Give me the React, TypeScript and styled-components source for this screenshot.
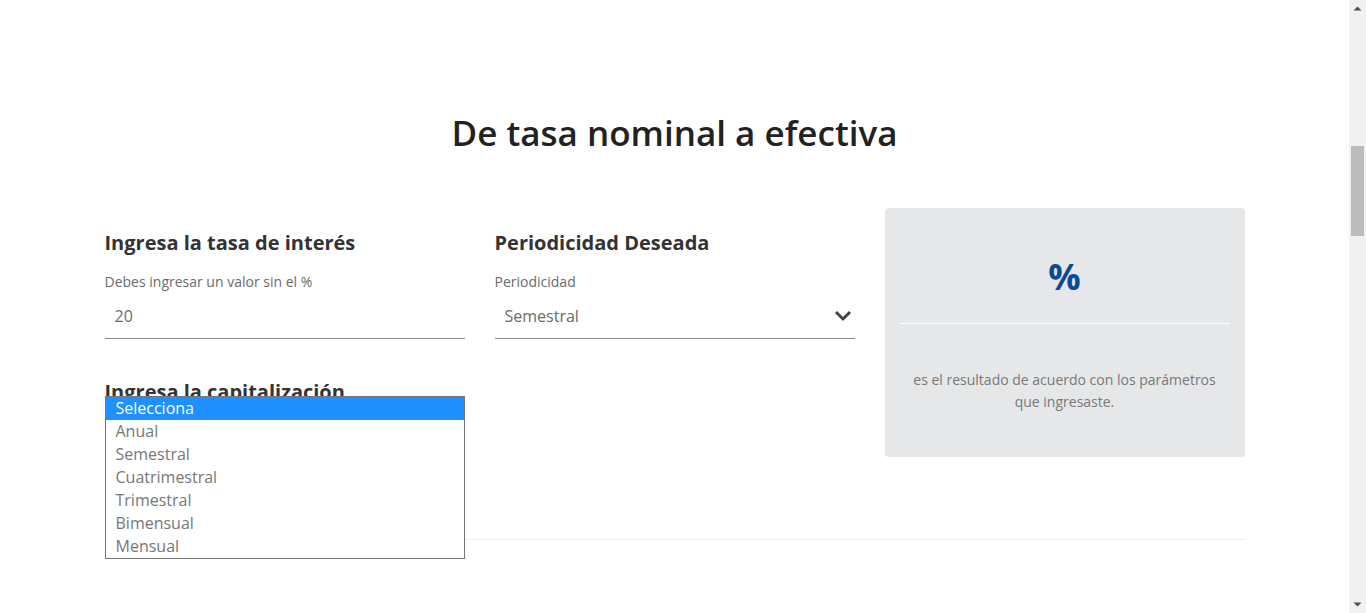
import React from "react";
import styled, { createGlobalStyle } from "styled-components";

const GlobalStyle = createGlobalStyle`
  html, body { margin: 0; padding: 0; background: #fff; overflow: hidden; }
  body { font-family: "Open Sans", "Noto Sans", sans-serif; color: #333; }
  * { box-sizing: border-box; }
`;

const Layout = styled.div`
  display: flex;
  height: 100vh;
`;

const Main = styled.main`
  flex: 1;
  min-width: 0;
  overflow: hidden;
`;

const ScrollTrack = styled.div`
  width: 17px;
  flex: none;
  display: flex;
  flex-direction: column;
  background: #f1f1f1;
`;

const ScrollButton = styled.div`
  height: 17px;
  flex: none;
  display: flex;
  align-items: center;
  justify-content: center;
`;

const ScrollRail = styled.div`
  flex: 1;
  display: flex;
  flex-direction: column;
  padding: 0 2px;
`;

const ScrollThumb = styled.div`
  height: 90px;
  margin-top: 129px;
  background: #bcbcbc;
`;

const Section = styled.section`
  width: 1140px;
  margin: 0 auto;
  padding-top: 111px;
`;

const Title = styled.h1`
  margin: 0 0 53px;
  text-align: center;
  font-size: 35px;
  line-height: 44px;
  font-weight: 600;
  color: #222;
`;

const Grid = styled.div`
  display: grid;
  grid-template-columns: 360px 360px 360px;
  column-gap: 30px;
  align-items: start;
`;

const Column = styled.div`
  display: flex;
  flex-direction: column;
`;

const Field = styled.div<{ $top: number }>`
  position: relative;
  display: flex;
  flex-direction: column;
  padding-top: ${(p) => p.$top}px;
`;

const FieldTitle = styled.h3`
  margin: 0;
  font-size: 20px;
  line-height: 24px;
  font-weight: 700;
  color: #333;
`;

const Label = styled.label`
  margin-top: 17px;
  font-size: 14px;
  line-height: 20px;
  color: #6b6b6b;
`;

const InputBox = styled.div`
  display: flex;
  align-items: center;
  justify-content: space-between;
  height: 41px;
  padding: 0 10px 5px;
  border-bottom: 1px solid #8a8a8a;
  font-size: 16px;
  color: #6b6b6b;
  margin-top: 6px;
`;

const Chevron = styled.svg`
  width: 18px;
  height: 12px;
  margin-right: -7px;
`;

const ListBox = styled.ul`
  position: absolute;
  left: 0;
  right: 0;
  top: 57px;
  margin: 0;
  padding: 0;
  list-style: none;
  background: #fff;
  border: 1px solid #767676;
  z-index: 2;
`;

const Option = styled.li<{ $active?: boolean }>`
  height: 23px;
  line-height: 23px;
  padding-left: 10px;
  font-size: 16px;
  color: ${(p) => (p.$active ? "#fff" : "#777")};
  background: ${(p) => (p.$active ? "#1e90ff" : "transparent")};
`;

const ResultCard = styled.div`
  height: 249px;
  background: #e6e7e9;
  border-radius: 4px;
  padding: 45px 15px 0;
  display: flex;
  flex-direction: column;
  align-items: stretch;
  text-align: center;
`;

const Percent = styled.div`
  font-size: 36px;
  line-height: 48px;
  font-weight: 700;
  color: #0b4a96;
`;

const CardDivider = styled.hr`
  margin: 22px 0 0;
  border: 0;
  border-top: 1px solid #fff;
`;

const CardText = styled.p`
  margin: 45px 0 0;
  font-size: 14px;
  line-height: 22px;
  color: #787878;
  padding: 0 10px;
`;

const BottomRule = styled.hr`
  margin: 0;
  margin-top: 51px;
  border: 0;
  border-top: 1px solid #eeeeee;
`;

const options = ["Selecciona", "Anual", "Semestral", "Cuatrimestral", "Trimestral", "Bimensual", "Mensual"];

export default function App() {
  return (
    <Layout>
      <GlobalStyle />
      <Main>
        <Section>
          <Title>De tasa nominal a efectiva</Title>
          <Grid>
            <Column>
              <Field $top={23}>
                <FieldTitle>Ingresa la tasa de interés</FieldTitle>
                <Label>Debes ingresar un valor sin el %</Label>
                <InputBox>20</InputBox>
              </Field>
              <Field $top={41}>
                <FieldTitle>Ingresa la capitalización</FieldTitle>
                <Label>Capitalización</Label>
                <InputBox>Selecciona</InputBox>
                <ListBox>
                  {options.map((o, i) => (
                    <Option key={o} $active={i === 0}>
                      {o}
                    </Option>
                  ))}
                </ListBox>
              </Field>
            </Column>
            <Column>
              <Field $top={23}>
                <FieldTitle>Periodicidad Deseada</FieldTitle>
                <Label>Periodicidad</Label>
                <InputBox>
                  Semestral
                  <Chevron viewBox="0 0 18 12">
                    <polyline points="2,2 9,9 16,2" fill="none" stroke="#444" strokeWidth="3" />
                  </Chevron>
                </InputBox>
              </Field>
            </Column>
            <ResultCard>
              <Percent>%</Percent>
              <CardDivider />
              <CardText>es el resultado de acuerdo con los parámetros que ingresaste.</CardText>
            </ResultCard>
          </Grid>
          <BottomRule />
        </Section>
      </Main>
      <ScrollTrack>
        <ScrollButton>
          <svg width="9" height="5" viewBox="0 0 9 5">
            <polygon points="0.5,4.5 4.5,0.5 8.5,4.5" fill="#505050" />
          </svg>
        </ScrollButton>
        <ScrollRail>
          <ScrollThumb />
        </ScrollRail>
        <ScrollButton>
          <svg width="9" height="5" viewBox="0 0 9 5">
            <polygon points="0.5,0.5 4.5,4.5 8.5,0.5" fill="#505050" />
          </svg>
        </ScrollButton>
      </ScrollTrack>
    </Layout>
  );
}
